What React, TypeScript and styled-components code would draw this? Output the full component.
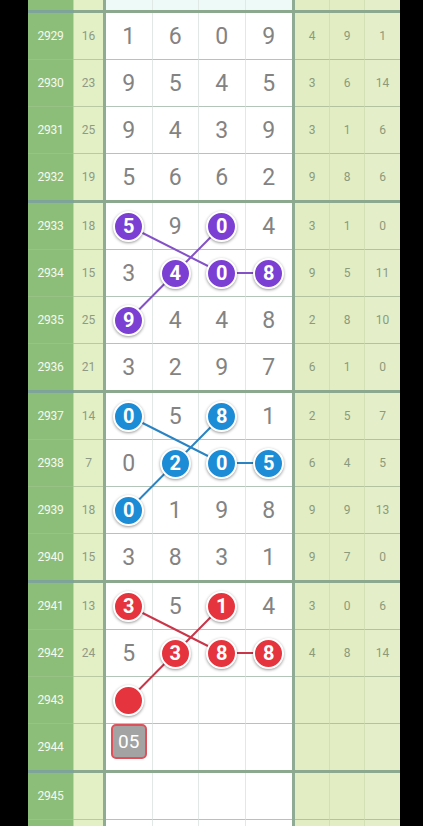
import React from 'react';
import styled, { createGlobalStyle } from 'styled-components';

const GlobalStyle = createGlobalStyle`
  html, body {
    margin: 0;
    padding: 0;
    background: #000;
    overflow: hidden;
  }
  body {
    font-family: Roboto, "Noto Sans", "Liberation Sans", sans-serif;
  }
`;

const ROW_H = 47;
const RULE_H = 3;
const ISSUE_W = 46;
const SUM_W = 29;
const BAR_W = 3;
const DIGIT_W = 46.5;
const STAT_W = 35;

const PURPLE = '#7b3fd4';
const BLUE = '#1d8cd6';
const RED = '#e5343d';

const LINE_COLORS: Record<string, string> = {
  [PURPLE]: '#8451c6',
  [BLUE]: '#2a84c2',
  [RED]: '#c9364a',
};

const Screen = styled('div')`
  height: 826px;
  overflow: hidden;
  padding-left: 28px;
`;

const Board = styled('div')`
  width: 372px;
`;

const Group = styled('div')`
  position: relative;
`;

const Rule = styled('div')`
  height: ${RULE_H}px;
  background: linear-gradient(
    to right,
    #7ea49a 0,
    #7ea49a ${ISSUE_W}px,
    #8ca98f ${ISSUE_W}px
  );
`;

const Row = styled('div')<{ $partial?: boolean }>`
  display: grid;
  grid-template-columns: ${ISSUE_W}px ${SUM_W}px ${BAR_W}px repeat(4, ${DIGIT_W}px) ${BAR_W}px repeat(3, ${STAT_W}px);
  height: ${(p) => (p.$partial ? '10px' : `${ROW_H}px`)};

  & > * {
    box-sizing: border-box;
  }

  &:last-child {
    height: ${(p) => (p.$partial ? '10px' : `${ROW_H - 1}px`)};
  }

  &:last-child > * {
    border-bottom: 0;
  }
`;

const IssueCell = styled('div')`
  background: #8cbd79;
  border-right: 1px solid #bcd9a4;
  border-bottom: 1px solid #97c385;
  color: #f5faef;
  font-size: 12px;
  letter-spacing: -0.3px;
  display: flex;
  align-items: center;
  justify-content: center;
`;

const SumCell = styled('div')`
  background: #e3efc4;
  border-bottom: 1px solid #b9c9a4;
  color: #8e9a86;
  font-size: 12px;
  display: flex;
  align-items: center;
  justify-content: center;
`;

const Bar = styled('div')`
  background: #8fab93;
`;

const DigitCell = styled('div')<{ $last?: boolean; $pale?: boolean }>`
  background: ${(p) => (p.$pale ? '#eefaf7' : '#ffffff')};
  border-right: ${(p) => (p.$last ? '0' : '1px solid #e1e8e5')};
  border-bottom: 1px solid #b3c5b8;
  color: #838383;
  font-size: 23px;
  display: flex;
  align-items: center;
  justify-content: center;
`;

const StatCell = styled('div')`
  background: #e2edc3;
  border-right: 1px solid #d3e0b6;
  border-bottom: 1px solid #b3c29f;
  color: #8c9a7c;
  font-size: 12px;
  display: flex;
  align-items: center;
  justify-content: center;

  &:last-child {
    border-right: 0;
    background: #e4eec8;
  }
`;

const Ball = styled('span')<{ $color: string }>`
  position: relative;
  z-index: 2;
  width: 27px;
  height: 27px;
  border-radius: 50%;
  border: 2px solid #ffffff;
  background: ${(p) => p.$color};
  box-shadow: 0 1px 3px rgba(0, 0, 0, 0.4);
  color: #ffffff;
  font-size: 20px;
  font-weight: 700;
  display: flex;
  align-items: center;
  justify-content: center;
`;

const PickBox = styled('span')`
  align-self: flex-start;
  width: 32px;
  height: 31px;
  border: 2px solid #e0505b;
  border-radius: 5px;
  background: #a3a3a3;
  color: #ffffff;
  font-size: 19px;
  display: flex;
  align-items: center;
  justify-content: center;
`;

const Lines = styled('svg')`
  position: absolute;
  left: 0;
  top: ${RULE_H}px;
  z-index: 1;
  pointer-events: none;
`;

type RowData = {
  issue: string;
  sum: string;
  digits: string[];
  stats: string[];
  balls?: number[];
  box?: string;
};

type GroupData = {
  color?: string;
  rows: RowData[];
  lines?: [number, number][][];
};

const blank = { sum: '', digits: ['', '', '', ''], stats: ['', '', ''] };

// each coloured block draws the same zig-zag between its balls
const zigzag: [number, number][][] = [
  [[0, 0], [1, 2]],
  [[0, 2], [1, 1], [2, 0]],
  [[1, 2], [1, 3]],
];

const groups: GroupData[] = [
  {
    rows: [
      { issue: '2929', sum: '16', digits: ['1', '6', '0', '9'], stats: ['4', '9', '1'] },
      { issue: '2930', sum: '23', digits: ['9', '5', '4', '5'], stats: ['3', '6', '14'] },
      { issue: '2931', sum: '25', digits: ['9', '4', '3', '9'], stats: ['3', '1', '6'] },
      { issue: '2932', sum: '19', digits: ['5', '6', '6', '2'], stats: ['9', '8', '6'] },
    ],
  },
  {
    color: PURPLE,
    rows: [
      { issue: '2933', sum: '18', digits: ['5', '9', '0', '4'], stats: ['3', '1', '0'], balls: [0, 2] },
      { issue: '2934', sum: '15', digits: ['3', '4', '0', '8'], stats: ['9', '5', '11'], balls: [1, 2, 3] },
      { issue: '2935', sum: '25', digits: ['9', '4', '4', '8'], stats: ['2', '8', '10'], balls: [0] },
      { issue: '2936', sum: '21', digits: ['3', '2', '9', '7'], stats: ['6', '1', '0'] },
    ],
    lines: zigzag,
  },
  {
    color: BLUE,
    rows: [
      { issue: '2937', sum: '14', digits: ['0', '5', '8', '1'], stats: ['2', '5', '7'], balls: [0, 2] },
      { issue: '2938', sum: '7', digits: ['0', '2', '0', '5'], stats: ['6', '4', '5'], balls: [1, 2, 3] },
      { issue: '2939', sum: '18', digits: ['0', '1', '9', '8'], stats: ['9', '9', '13'], balls: [0] },
      { issue: '2940', sum: '15', digits: ['3', '8', '3', '1'], stats: ['9', '7', '0'] },
    ],
    lines: zigzag,
  },
  {
    color: RED,
    rows: [
      { issue: '2941', sum: '13', digits: ['3', '5', '1', '4'], stats: ['3', '0', '6'], balls: [0, 2] },
      { issue: '2942', sum: '24', digits: ['5', '3', '8', '8'], stats: ['4', '8', '14'], balls: [1, 2, 3] },
      { issue: '2943', ...blank, balls: [0] },
      { issue: '2944', ...blank, box: '05' },
    ],
    lines: zigzag,
  },
  {
    rows: [
      { issue: '2945', ...blank },
      { issue: '', ...blank },
    ],
  },
];

const centerX = (col: number) => ISSUE_W + SUM_W + BAR_W + DIGIT_W * col + DIGIT_W / 2 - 0.5;
const centerY = (row: number) => ROW_H * row + (ROW_H - 1) / 2;

const DataRow: React.FC<{ row: RowData; color?: string }> = ({ row, color }) => (
  <Row>
    <IssueCell>{row.issue}</IssueCell>
    <SumCell>{row.sum}</SumCell>
    <Bar />
    {row.digits.map((d, i) => {
      const isBall = color && row.balls?.includes(i);
      return (
        <DigitCell key={i} $last={i === 3}>
          {isBall ? (
            <Ball $color={color!}>{d}</Ball>
          ) : row.box && i === 0 ? (
            <PickBox>{row.box}</PickBox>
          ) : (
            d
          )}
        </DigitCell>
      );
    })}
    <Bar />
    {row.stats.map((s, i) => (
      <StatCell key={i}>{s}</StatCell>
    ))}
  </Row>
);

const App: React.FC = () => {
  return (
    <Screen>
      <GlobalStyle />
      <Board>
        <Group>
          <Row $partial>
            <IssueCell />
            <SumCell />
            <Bar />
            {[0, 1, 2, 3].map((i) => (
              <DigitCell key={i} $last={i === 3} $pale />
            ))}
            <Bar />
            {[0, 1, 2].map((i) => (
              <StatCell key={i} />
            ))}
          </Row>
        </Group>
        {groups.map((g, gi) => (
          <Group key={gi}>
            <Rule />
            {g.color && g.lines && (
              <Lines width={372} height={ROW_H * 4}>
                {g.lines.map((pts, li) => (
                  <polyline
                    key={li}
                    points={pts.map(([r, c]) => `${centerX(c)},${centerY(r)}`).join(' ')}
                    fill="none"
                    stroke={LINE_COLORS[g.color!]}
                    strokeWidth={2}
                  />
                ))}
              </Lines>
            )}
            {g.rows.map((r, ri) => (
              <DataRow key={ri} row={r} color={g.color} />
            ))}
          </Group>
        ))}
      </Board>
    </Screen>
  );
};

export default App;
